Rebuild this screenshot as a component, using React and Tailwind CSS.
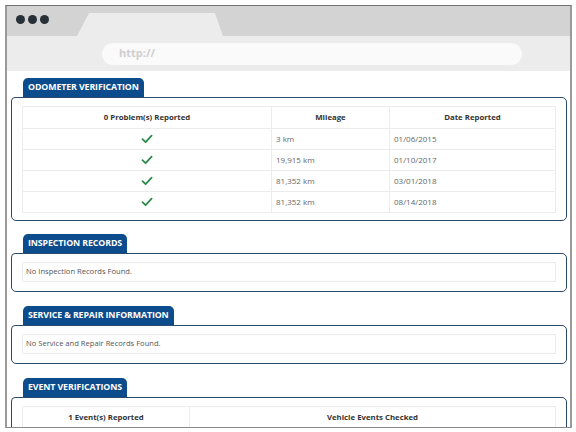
import React from "react";

const font = { fontFamily: '"Open Sans", "Noto Sans", sans-serif' };

function Check() {
  return (
    <svg width="12" height="10" viewBox="0 0 12 10" className="inline-block">
      <path d="M1.5 5.2 L4.6 8.2 L10.6 1.6" fill="none" stroke="#2f8a4e" strokeWidth="1.8" strokeLinecap="round" strokeLinejoin="round" />
    </svg>
  );
}

function Section({ title, children, className = "", pad = "pb-[9px]" }) {
  return (
    <div className={className}>
      <div className="ml-[12px] flex h-[19px] w-fit items-center rounded-t-[5px] bg-[#0c4c8c] px-[5px] text-[8.8px] font-bold leading-none tracking-[-0.1px] text-white">
        {title}
      </div>
      <div className={"rounded-[5px] rounded-tl-[4px] border border-[#2b4a6b] px-[10px] pt-[8px] " + pad}>
        {children}
      </div>
    </div>
  );
}

const rows = [
  ["3 km", "01/06/2015"],
  ["19,915 km", "01/10/2017"],
  ["81,352 km", "03/01/2018"],
  ["81,352 km", "08/14/2018"],
];

export default function App() {
  return (
    <div className="h-[432px] w-[576px] overflow-hidden bg-white pt-[5px] pl-[5px]" style={font}>
      <div className="flex h-[423px] w-[567px] flex-col overflow-hidden border-x-2 border-t border-b border-x-[#9a9a9a] border-t-[#6f6f6f] border-b-[#8a8a8a]">
        {/* tab bar */}
        <div className="relative h-[30px] shrink-0 bg-[#d3d3d3]">
          <div className="absolute left-[9px] top-[9px] flex gap-[3px]">
            <span className="h-[9px] w-[9px] rounded-full bg-[#263036]" />
            <span className="h-[9px] w-[9px] rounded-full bg-[#263036]" />
            <span className="h-[9px] w-[9px] rounded-full bg-[#263036]" />
          </div>
          <svg className="absolute left-[70px] top-[7px]" width="150" height="23" viewBox="0 0 150 23">
            <path d="M0 23 L12 0 L138 0 L146 23 Z" fill="#ececec" />
          </svg>
        </div>
        {/* address bar */}
        <div className="flex h-[35px] shrink-0 items-center bg-[#ececec] pl-[95px]">
          <div className="flex h-[22px] w-[420px] items-center rounded-full bg-[#fafafa] pl-[17px] text-[11px] font-bold text-[#cfcfcf]">
            http://
          </div>
        </div>
        {/* content */}
        <div className="flex-1 overflow-hidden pt-[7px] pl-[4px] pr-[3px]">
          <Section title="ODOMETER VERIFICATION" pad="pb-[7px]">
            <table className="w-full border-collapse text-[8px] text-[#666]">
              <thead>
                <tr className="h-[22px]">
                  <th className="w-[249px] border border-[#ececec] text-[7.8px] font-bold text-[#333]">0 Problem(s) Reported</th>
                  <th className="w-[118px] border border-[#ececec] text-[7.8px] font-bold text-[#333]">Mileage</th>
                  <th className="border border-[#ececec] text-[7.8px] font-bold text-[#333]">Date Reported</th>
                </tr>
              </thead>
              <tbody>
                {rows.map((r, i) => (
                  <tr key={i} className="h-[21px]">
                    <td className="border border-[#ececec] text-center align-middle leading-none">
                      <Check />
                    </td>
                    <td className="border border-[#ececec] pl-[4px]">{r[0]}</td>
                    <td className="border border-[#ececec] pl-[4px]">{r[1]}</td>
                  </tr>
                ))}
              </tbody>
            </table>
          </Section>

          <Section title="INSPECTION RECORDS" className="mt-[13px]">
            <div className="flex h-[20px] items-center border border-[#ececec] pl-[3px] text-[7.6px] text-[#555]">
              No Inspection Records Found.
            </div>
          </Section>

          <Section title="SERVICE & REPAIR INFORMATION" className="mt-[14px]">
            <div className="flex h-[20px] items-center border border-[#ececec] pl-[3px] text-[7.6px] text-[#555]">
              No Service and Repair Records Found.
            </div>
          </Section>

          <Section title="EVENT VERIFICATIONS" className="mt-[14px]">
            <table className="w-full border-collapse text-[8px] text-[#666]">
              <thead>
                <tr className="h-[22px]">
                  <th className="w-[167px] border border-[#ececec] text-[7.8px] font-bold text-[#333]">1 Event(s) Reported</th>
                  <th className="border border-[#ececec] text-[7.8px] font-bold text-[#333]">Vehicle Events Checked</th>
                </tr>
              </thead>
              <tbody>
                <tr className="h-[21px]">
                  <td className="border border-[#ececec]" />
                  <td className="border border-[#ececec]" />
                </tr>
              </tbody>
            </table>
          </Section>
        </div>
      </div>
    </div>
  );
}
